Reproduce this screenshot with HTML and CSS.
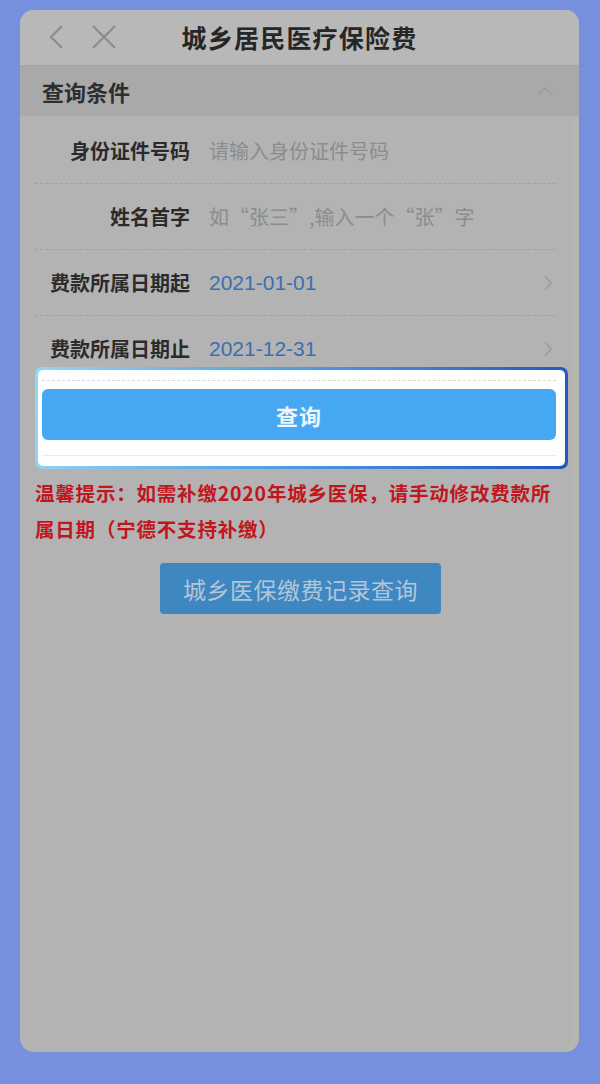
FILE: index.html
```html
<!DOCTYPE html>
<html lang="zh">
<head>
<meta charset="utf-8">
<title>城乡居民医疗保险费</title>
<link rel="stylesheet" href="styles.css">
</head>
<body>
<div class="phone">
  <header class="topbar">
    <div class="nav-icons">
      <svg class="ico" width="20" height="26" viewBox="0 0 20 26"><path d="M15 2 L4 13 L15 24" fill="none" stroke="#8a8a8a" stroke-width="2"/></svg>
      <svg class="ico" width="26" height="26" viewBox="0 0 26 26"><path d="M2 2 L24 24 M24 2 L2 24" fill="none" stroke="#8a8a8a" stroke-width="2"/></svg>
    </div>
    <h1 class="title">城乡居民医疗保险费</h1>
  </header>
  <div class="section-bar">
    <span>查询条件</span>
    <svg width="16" height="10" viewBox="0 0 16 10"><path d="M1 9 L8 2 L15 9" fill="none" stroke="#9c9c9c" stroke-width="1.6"/></svg>
  </div>
  <div class="form">
    <div class="row">
      <span class="label">身份证件号码</span>
      <span class="placeholder">请输入身份证件号码</span>
    </div>
    <div class="row">
      <span class="label">姓名首字</span>
      <span class="placeholder">如“张三”,输入一个“张”字</span>
    </div>
    <div class="row">
      <span class="label">费款所属日期起</span>
      <span class="date">2021-01-01</span>
      <svg class="arrow" width="10" height="16" viewBox="0 0 10 16"><path d="M2 1 L8 8 L2 15" fill="none" stroke="#9c9c9c" stroke-width="1.6"/></svg>
    </div>
    <div class="row last">
      <span class="label">费款所属日期止</span>
      <span class="date">2021-12-31</span>
      <svg class="arrow" width="10" height="16" viewBox="0 0 10 16"><path d="M2 1 L8 8 L2 15" fill="none" stroke="#9c9c9c" stroke-width="1.6"/></svg>
    </div>
  </div>
  <div class="spotlight">
    <div class="spot-inner">
      <div class="dash"></div>
      <button class="query-btn">查询</button>
      <div class="faint"></div>
    </div>
  </div>
  <p class="tip">温馨提示：如需补缴2020年城乡医保，请手动修改费款所属日期（宁德不支持补缴）</p>
  <div class="record-wrap">
    <button class="record-btn">城乡医保缴费记录查询</button>
  </div>
</div>
</body>
</html>
```
FILE: styles.css
```css
html, body {
  margin: 0;
  padding: 0;
}
body {
  background: #7690dd;
  width: 600px;
  height: 1084px;
  overflow: hidden;
  font-family: "Noto Sans CJK SC", "Noto Sans", sans-serif;
}
.phone {
  margin: 10px 0 0 20px;
  width: 559px;
  height: 1042px;
  background: #b3b3b3;
  border-radius: 14px;
  overflow: hidden;
  display: flex;
  flex-direction: column;
  box-shadow: inset -8px 0 0 #b6b6b1;
}
.topbar {
  height: 55px;
  background: #b8b8b8;
  border-bottom: 1px solid #a4a4a4;
  position: relative;
  display: flex;
  align-items: center;
  justify-content: center;
}
.nav-icons {
  position: absolute;
  left: 27px;
  top: 14px;
  display: flex;
  gap: 24px;
  align-items: center;
}
.title {
  margin: 0;
  font-size: 25px;
  font-weight: 700;
  color: #262626;
  letter-spacing: 1.2px;
  line-height: 1;
}
.section-bar {
  height: 50px;
  background: #a9a9a9;
  display: flex;
  align-items: center;
  justify-content: space-between;
  padding: 0 26px 0 22px;
  font-size: 22px;
  font-weight: 700;
  color: #2e2e2e;
}
.form {
  padding: 2px 23px 0 15px;
}
.row {
  height: 65px;
  border-bottom: 1px dashed #a0a0a0;
  display: flex;
  align-items: center;
  font-size: 20px;
}
.row.last {
  border-bottom: none;
}
.label {
  width: 155px;
  text-align: right;
  font-weight: 700;
  color: #2b2b2b;
  flex-shrink: 0;
}
.placeholder {
  margin-left: 19px;
  color: #8c8c8c;
}
.date {
  margin-left: 19px;
  color: #3c6eb2;
  font-size: 21px;
  font-family: "Liberation Sans", "Noto Sans", sans-serif;
  flex: 1;
}
.arrow {
  margin-right: 3px;
}
.spotlight {
  margin: -14px 11px 0 15px;
  padding: 3px;
  border-radius: 7px;
  background: linear-gradient(100deg, #95d6f3 0%, #5aa6e4 40%, #1f56c0 100%);
  position: relative;
}
.spot-inner {
  background: #fdfefe;
  border-radius: 5px;
  height: 96px;
  padding: 0 9px 0 4px;
  display: flex;
  flex-direction: column;
}
.dash {
  margin-top: 10px;
  border-top: 1px dashed #e2d2d2;
}
.query-btn {
  margin-top: 8px;
  height: 51px;
  border: none;
  border-radius: 6px;
  background: #46a8f2;
  color: #eef5fb;
  font-family: "Noto Sans CJK SC", sans-serif;
  font-size: 22px;
  font-weight: 700;
  letter-spacing: 1px;
}
.faint {
  margin-top: 15px;
  border-top: 1px solid #eaeaea;
}
.tip {
  margin: 6px 19px 0 15px;
  font-size: 19.5px;
  line-height: 36px;
  font-weight: 700;
  color: #c1161e;
  letter-spacing: 0.8px;
}
.record-wrap {
  display: flex;
  justify-content: center;
  padding: 16px 0 0 2px;
}
.record-btn {
  width: 281px;
  height: 51px;
  border: none;
  border-radius: 4px;
  background: #3e87c1;
  color: #b3c6d8;
  font-family: "Noto Sans CJK SC", sans-serif;
  font-size: 23px;
  letter-spacing: 0.5px;
}
```
